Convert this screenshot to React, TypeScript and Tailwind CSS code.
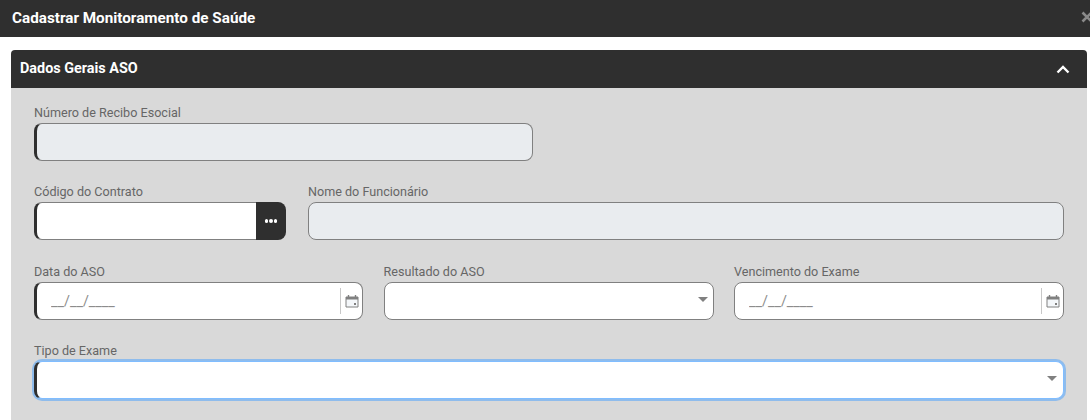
import { ReactNode } from "react"

const fieldBase = "h-[38px] w-full rounded-lg border border-[#808080] border-l-[3px] border-l-[#2f2f2f] outline-none"
const fieldPlain = "h-[38px] w-full rounded-lg border border-[#808080] outline-none"

function Field({ label, children, className = "" }: { label: string; children: ReactNode; className?: string }) {
  return (
    <div className={className}>
      <label className="mb-[1px] block h-[18px] text-[12.6px] leading-[18px] text-[#666666]">{label}</label>
      {children}
    </div>
  )
}

function CalendarIcon() {
  return (
    <svg width="14" height="14" viewBox="0 0 14 14" className="text-[#808080]">
      <path d="M1 3h12v10H1z" fill="#f4f7fa" stroke="currentColor" strokeWidth="1" />
      <path d="M1 3h12v2.5H1z" fill="currentColor" />
      <path d="M3.5 1v2M10.5 1v2" stroke="currentColor" strokeWidth="1.4" />
      <rect x="9" y="9" width="2" height="2" fill="currentColor" />
    </svg>
  )
}

function DateField({ accent }: { accent?: boolean }) {
  return (
    <div className="relative">
      <input
        placeholder="__/__/____"
        className={`${accent ? fieldBase : fieldPlain} bg-white pl-[14px] text-[14.4px] placeholder:text-[#8c8c8c]`}
      />
      <div className="absolute top-[6px] right-0 flex h-[26px] w-[23px] items-center justify-center border-l border-[#c8c8c8]">
        <CalendarIcon />
      </div>
    </div>
  )
}

function SelectField({ focused }: { focused?: boolean }) {
  return (
    <div
      className={
        focused
          ? "flex h-[38px] items-center justify-end rounded-lg border border-[#80bdff] border-l-[3px] border-l-[#2f2f2f] bg-white pr-[6px] shadow-[0_0_0_2px_#8fbcec]"
          : "flex h-[38px] items-center justify-end rounded-lg border border-[#808080] bg-white pr-[5px]"
      }
    >
      <span className="mb-[3px] h-0 w-0 border-x-[5.5px] border-t-[5px] border-x-transparent border-t-[#808080]" />
    </div>
  )
}

export default function App() {
  return (
    <div className="h-screen overflow-hidden bg-white font-['Roboto',sans-serif]">
      <div className="flex h-[37px] items-center justify-between overflow-hidden bg-[#2f2f2f] pl-3">
        <h1 className="text-[15.25px] font-bold text-white">Cadastrar Monitoramento de Saúde</h1>
        <svg width="12" height="12" viewBox="0 0 12 12" className="mr-[-3px] mb-[3px] shrink-0 text-[#8a8a8a]">
          <path d="M1.5 1.5l9 9M10.5 1.5l-9 9" stroke="currentColor" strokeWidth="2.6" />
        </svg>
      </div>

      <div className="mt-[13px] mr-[3px] ml-[11px] overflow-hidden rounded-t-[4px]">
        <div className="flex h-[38px] items-center justify-between bg-[#2f2f2f] pr-[17px] pl-[9px]">
          <h2 className="text-[14.4px] font-bold text-white">Dados Gerais ASO</h2>
          <svg width="14" height="9" viewBox="0 0 14 9" className="text-white">
            <path d="M1.5 7.5L7 2l5.5 5.5" fill="none" stroke="currentColor" strokeWidth="2.4" />
          </svg>
        </div>

        <div className="h-[400px] bg-[#d9d9d9] pt-[16px] pr-[23px] pl-[23px]">
          <Field label="Número de Recibo Esocial" className="w-[499px]">
            <input disabled className={`${fieldBase} bg-[#e9ecef]`} />
          </Field>

          <div className="mt-[22px] flex gap-[22px]">
            <Field label="Código do Contrato" className="w-[252px]">
              <div className="flex">
                <input className="h-[38px] w-full min-w-0 rounded-l-lg border border-r-0 border-[#808080] border-l-[3px] border-l-[#2f2f2f] bg-white outline-none" />
                <button className="flex h-[38px] w-[30px] shrink-0 items-center justify-center gap-[1px] rounded-r-lg bg-[#2f2f2f]">
                  <span className="size-[3.5px] rounded-full bg-white" />
                  <span className="size-[3.5px] rounded-full bg-white" />
                  <span className="size-[3.5px] rounded-full bg-white" />
                </button>
              </div>
            </Field>
            <Field label="Nome do Funcionário" className="flex-1">
              <input disabled className={`${fieldPlain} bg-[#e9ecef]`} />
            </Field>
          </div>

          <div className="mt-[23px] grid grid-cols-[329px_1fr_1fr] gap-x-[20.5px]">
            <Field label="Data do ASO">
              <DateField accent />
            </Field>
            <Field label="Resultado do ASO">
              <SelectField />
            </Field>
            <Field label="Vencimento do Exame">
              <DateField />
            </Field>
          </div>

          <Field label="Tipo de Exame" className="mt-[22px]">
            <SelectField focused />
          </Field>
        </div>
      </div>
    </div>
  )
}
